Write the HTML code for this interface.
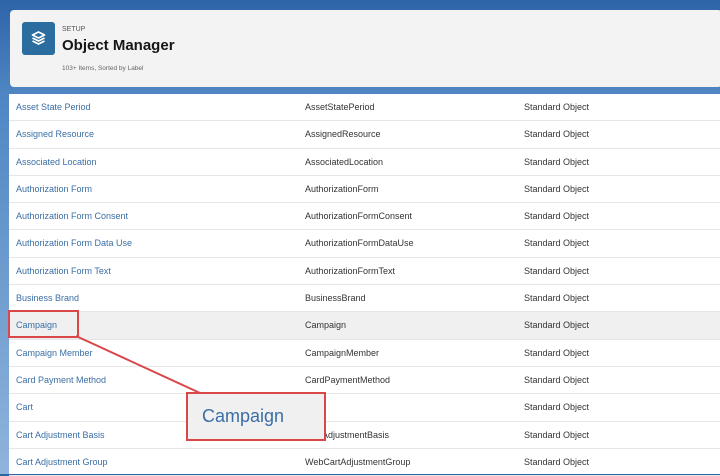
<!DOCTYPE html>
<html><head><style>
body{margin:0;width:720px;height:474px;overflow:hidden;background:linear-gradient(180deg,#2d64a8,#4f86c3 20%,#8fb4dc);font-family:"Liberation Sans",sans-serif;position:relative}
.hdr{position:absolute;left:10px;top:10px;width:712px;height:77px;background:#f3f3f3;border-radius:4px}
.ic{position:absolute;left:12px;top:12px;width:33px;height:33px;background:#2a6d9e;border-radius:3px}
.setup{position:absolute;left:52px;top:16px;font-size:7px;color:#555}
.title{position:absolute;left:52px;top:27px;font-size:15px;font-weight:bold;color:#161616}
.sub{position:absolute;left:52px;top:55px;font-size:6.5px;color:#666}
.tbl{position:absolute;left:9px;top:94px;width:711px;height:380px;background:#fff}
.row{height:27.3px;border-bottom:1px solid #e6e6e6;box-sizing:border-box;position:relative;font-size:9px;line-height:26px}
.row span{position:absolute}
.a{left:7px;color:#3a6ea5}.b{left:296px;color:#333}.c{left:515px;color:#333}
.hl{background:#f0f0f0}
</style></head><body>
<div class="hdr"><div class="ic"><svg width="33" height="33" viewBox="0 0 33 33"><path d="M16.5 10l6 3-6 3-6-3z M10.5 16l6 3 6-3 M10.5 19l6 3 6-3" fill="none" stroke="#fff" stroke-width="1.8" stroke-linejoin="round"/></svg></div>
<div class="setup">SETUP</div><div class="title">Object Manager</div><div class="sub">103+ Items, Sorted by Label</div></div>
<div class="tbl">
<div class="row"><span class="a">Asset State Period</span><span class="b">AssetStatePeriod</span><span class="c">Standard Object</span></div>
<div class="row"><span class="a">Assigned Resource</span><span class="b">AssignedResource</span><span class="c">Standard Object</span></div>
<div class="row"><span class="a">Associated Location</span><span class="b">AssociatedLocation</span><span class="c">Standard Object</span></div>
<div class="row"><span class="a">Authorization Form</span><span class="b">AuthorizationForm</span><span class="c">Standard Object</span></div>
<div class="row"><span class="a">Authorization Form Consent</span><span class="b">AuthorizationFormConsent</span><span class="c">Standard Object</span></div>
<div class="row"><span class="a">Authorization Form Data Use</span><span class="b">AuthorizationFormDataUse</span><span class="c">Standard Object</span></div>
<div class="row"><span class="a">Authorization Form Text</span><span class="b">AuthorizationFormText</span><span class="c">Standard Object</span></div>
<div class="row"><span class="a">Business Brand</span><span class="b">BusinessBrand</span><span class="c">Standard Object</span></div>
<div class="row hl"><span class="a">Campaign</span><span class="b">Campaign</span><span class="c">Standard Object</span></div>
<div class="row"><span class="a">Campaign Member</span><span class="b">CampaignMember</span><span class="c">Standard Object</span></div>
<div class="row"><span class="a">Card Payment Method</span><span class="b">CardPaymentMethod</span><span class="c">Standard Object</span></div>
<div class="row"><span class="a">Cart</span><span class="b">Cart</span><span class="c">Standard Object</span></div>
<div class="row"><span class="a">Cart Adjustment Basis</span><span class="b">CartAdjustmentBasis</span><span class="c">Standard Object</span></div>
<div class="row"><span class="a">Cart Adjustment Group</span><span class="b">WebCartAdjustmentGroup</span><span class="c">Standard Object</span></div>
</div>
<svg style="position:absolute;left:0;top:0" width="720" height="474"><line x1="76" y1="336" x2="200" y2="393" stroke="#d9474b" stroke-width="2"/><rect x="9" y="311" width="69" height="26" fill="none" stroke="#d9474b" stroke-width="2"/></svg>
<div style="position:absolute;left:186px;top:392px;width:136px;height:45px;background:#f0f0f0;border:2px solid #d9474b;font-size:18px;color:#3a6ea5;line-height:45px;padding-left:14px;box-sizing:content-box;width:122px">Campaign</div>
</body></html>
